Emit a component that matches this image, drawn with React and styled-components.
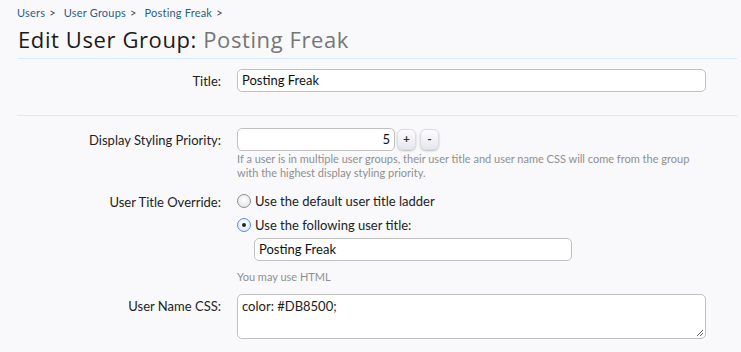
import React from "react";
import styled, { createGlobalStyle } from "styled-components";

const Global = createGlobalStyle`
  html, body { margin: 0; padding: 0; background: #f9f9fc; }
  body { font-family: "Lato", "Liberation Sans", sans-serif; color: #222; }
  * { box-sizing: border-box; }
`;

const Page = styled.div`
  padding: 6px 4px 0 17px;
`;

const Crumbs = styled.nav`
  display: flex;
  gap: 8px;
  font-size: 11px;
  line-height: 14px;
  height: 14px;
`;

const Crumb = styled.span`
  color: #2b5d86;
  letter-spacing: 0.2px;
  &::after { content: " >"; color: #444; margin-left: 1px; }
`;

const Heading = styled.h1`
  margin: 5px 0 0 1px;
  font-family: "Open Sans", "Lato", sans-serif;
  font-size: 22px;
  letter-spacing: 0.6px;
  font-weight: normal;
  line-height: 28px;
  color: #1a1a1a;
  padding-bottom: 5px;
  border-bottom: 1px solid #d7eafb;
  span { color: #767676; }
`;

const Section = styled.div`
  padding: ${(p) => p.$pt || 10}px 0 ${(p) => p.$pb || 0}px;
  border-bottom: ${(p) => (p.$sep ? "1px solid #d7eafb" : "none")};
`;

const Row = styled.div`
  display: grid;
  grid-template-columns: 204px 469px;
  column-gap: 16px;
  margin-bottom: ${(p) => p.$mb || 0}px;
`;

const Label = styled.div`
  text-align: right;
  font-size: 13px;
  padding-top: ${(p) => p.$pt ?? 4}px;
  color: #222;
`;

const Controls = styled.div`
  display: flex;
  flex-direction: column;
`;

const TextInput = styled.div`
  height: 23px;
  width: ${(p) => p.$w || "100%"};
  margin-left: ${(p) => p.$ml || 0}px;
  background: #fff;
  border: 1px solid #c0c0c0;
  border-radius: 5px;
  font-size: 13px;
  line-height: 21px;
  padding: 0 4px;
  text-align: ${(p) => p.$align || "left"};
  color: #111;
`;

const SpinRow = styled.div`
  display: flex;
  align-items: center;
  gap: 2px;
`;

const SpinButton = styled.div`
  width: 19px;
  height: 21px;
  border-radius: 6px;
  background: linear-gradient(#fdfdff, #e6e6ee);
  box-shadow: 0 1px 2px rgba(0,0,0,0.25);
  border: 1px solid #dcdce4;
  font-size: 12px;
  font-weight: bold;
  line-height: 18px;
  text-align: center;
  color: #333;
  margin-left: ${(p) => p.$ml || 0}px;
`;

const Hint = styled.div`
  font-size: 11px;
  line-height: 14px;
  color: #8f8f8f;
  margin-top: ${(p) => p.$mt || 0}px;
`;

const RadioLine = styled.label`
  display: flex;
  align-items: center;
  gap: 4px;
  font-size: 13px;
  height: 16px;
  margin-bottom: ${(p) => p.$mb || 0}px;
`;

const Radio = styled.span`
  width: 14px;
  height: 14px;
  border-radius: 50%;
  border: 1px solid #8e8f8f;
  background: radial-gradient(circle at 50% 40%, #fff, #dedede);
  display: flex;
  align-items: center;
  justify-content: center;
  &::after {
    content: "";
    display: ${(p) => (p.$on ? "block" : "none")};
    width: 4px;
    height: 4px;
    border-radius: 50%;
    background: #222;
  }
  ${(p) => p.$on && "border-color: #5f8fc8; background: radial-gradient(circle at 50% 40%, #fff, #cfe2f7);"}
`;

const TextArea = styled.div`
  height: 45px;
  background: #fff;
  border: 1px solid #c0c0c0;
  border-radius: 5px;
  font-size: 13px;
  padding: 3px 4px;
  position: relative;
`;

const Grip = styled.svg`
  position: absolute;
  right: 1px;
  bottom: 1px;
`;

export default function App() {
  return (
    <>
      <Global />
      <Page>
        <Crumbs>
          <Crumb>Users</Crumb>
          <Crumb>User Groups</Crumb>
          <Crumb>Posting Freak</Crumb>
        </Crumbs>
        <Heading>
          Edit User Group: <span>Posting Freak</span>
        </Heading>
        <Section $sep $pb={23}>
          <Row>
            <Label>Title:</Label>
            <TextInput>Posting Freak</TextInput>
          </Row>
        </Section>
        <Section $pt={12}>
          <Row $mb={13}>
            <Label>Display Styling Priority:</Label>
            <Controls>
              <SpinRow>
                <TextInput $w="158px" $align="right">5</TextInput>
                <SpinButton>+</SpinButton>
                <SpinButton $ml={2}>-</SpinButton>
              </SpinRow>
              <Hint $mt={1}>
                If a user is in multiple user groups, their user title and user name CSS will come from the group
                with the highest display styling priority.
              </Hint>
            </Controls>
          </Row>
          <Row $mb={10}>
            <Label $pt={1}>User Title Override:</Label>
            <Controls>
              <RadioLine $mb={8}>
                <Radio />
                Use the default user title ladder
              </RadioLine>
              <RadioLine $mb={5}>
                <Radio $on />
                Use the following user title:
              </RadioLine>
              <TextInput $w="318px" $ml={17}>Posting Freak</TextInput>
              <Hint $mt={9}>You may use HTML</Hint>
            </Controls>
          </Row>
          <Row>
            <Label>User Name CSS:</Label>
            <TextArea>
              color: #DB8500;
              <Grip width="9" height="9" viewBox="0 0 9 9">
                <path d="M8 2 L2 8 M8 5 L5 8" stroke="#666" strokeWidth="1" />
              </Grip>
            </TextArea>
          </Row>
        </Section>
      </Page>
    </>
  );
}
